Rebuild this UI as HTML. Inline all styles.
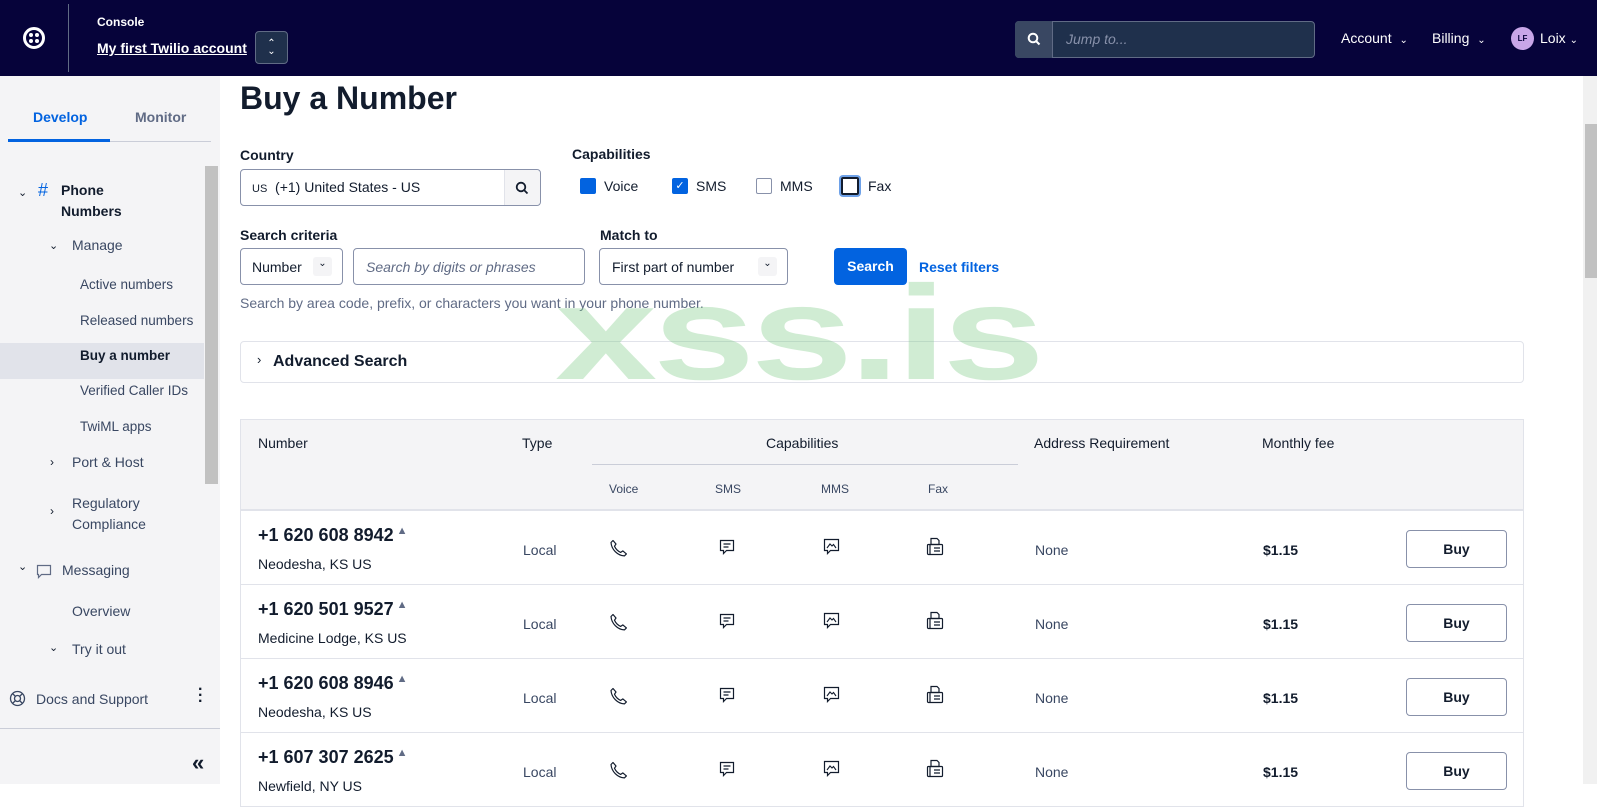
<!DOCTYPE html>
<html><head><meta charset="utf-8"><style>
*{box-sizing:border-box;margin:0;padding:0}
body{width:1597px;height:784px;overflow:hidden;font-family:"Liberation Sans",Arial,sans-serif;color:#121c2d;background:#fff;position:relative}
.a{position:absolute;white-space:nowrap}
.hdr{position:absolute;left:0;top:0;width:1597px;height:76px;background:#06033a;color:#fff}
.side{position:absolute;left:0;top:76px;width:220px;height:708px;background:#f4f4f6}
.lbl{font-weight:bold;font-size:14px}
.box{position:absolute;border:1px solid #8891aa;border-radius:4px;background:#fff}
.sm{font-size:14px;color:#121c2d}
.cb{position:absolute;width:16px;height:16px;border-radius:2px}
.row{position:absolute;left:240px;width:1284px;height:74px;border-bottom:1px solid #e1e3ea;border-left:1px solid #e1e3ea;border-right:1px solid #e1e3ea}
.buy{position:absolute;left:1165px;top:19px;width:101px;height:38px;border:1px solid #8891aa;border-radius:4px;text-align:center;line-height:36px;font-weight:bold;font-size:14px}
</style></head><body>

<div class="hdr">
  <svg class="a" style="left:22px;top:26px" width="24" height="24" viewBox="0 0 24 24"><circle cx="12" cy="12" r="9.5" fill="none" stroke="#fff" stroke-width="3"/><circle cx="9" cy="9" r="2" fill="#fff"/><circle cx="15" cy="9" r="2" fill="#fff"/><circle cx="9" cy="15" r="2" fill="#fff"/><circle cx="15" cy="15" r="2" fill="#fff"/></svg>
  <div class="a" style="left:68px;top:4px;width:1px;height:68px;background:#606b85"></div>
  <div class="a" style="left:97px;top:15px;font-size:12px;font-weight:bold">Console</div>
  <div class="a" style="left:97px;top:40px;font-size:14px;font-weight:bold;text-decoration:underline">My first Twilio account</div>
  <div class="a" style="left:255px;top:31px;width:33px;height:33px;border:1px solid #606b85;border-radius:4px;background:#1f304c;text-align:center;font-size:10px;line-height:8px;padding-top:8px">⌃<br>⌄</div>
  <div class="a" style="left:1015px;top:21px;width:300px;height:37px;border:1px solid #606b85;border-radius:4px;background:#1f304c"></div>
  <div class="a" style="left:1015px;top:21px;width:38px;height:37px;border-right:1px solid #606b85;background:#394762;border-radius:4px 0 0 4px"></div>
  <svg class="a" style="left:1027px;top:32px" width="14" height="14" viewBox="0 0 14 14"><circle cx="6" cy="6" r="4.3" fill="none" stroke="#fff" stroke-width="2"/><path d="M9 9l3.5 3.5" stroke="#fff" stroke-width="2"/></svg>
  <div class="a" style="left:1066px;top:31px;font-size:14px;font-style:italic;color:#8891aa">Jump to...</div>
  <div class="a" style="left:1341px;top:30px;font-size:14px">Account <span style="font-size:10px;margin-left:4px">⌄</span></div>
  <div class="a" style="left:1432px;top:30px;font-size:14px">Billing <span style="font-size:10px;margin-left:4px">⌄</span></div>
  <div class="a" style="left:1511px;top:27px;width:23px;height:23px;border-radius:50%;background:#c8a6e8;color:#06033a;font-size:8px;font-weight:bold;text-align:center;line-height:23px">LF</div>
  <div class="a" style="left:1540px;top:30px;font-size:14px">Loix <span style="font-size:10px">⌄</span></div>
</div>

<div class="side">
  <div class="a" style="left:33px;top:33px;font-size:14px;color:#0263e0;font-weight:bold">Develop</div>
  <div class="a" style="left:135px;top:33px;font-size:14px;color:#606b85;font-weight:bold">Monitor</div>
  <div class="a" style="left:8px;top:65px;width:203px;height:1px;background:#cacdd8"></div>
  <div class="a" style="left:8px;top:63px;width:102px;height:3px;background:#0263e0"></div>
  <div class="a" style="left:205px;top:90px;width:13px;height:318px;background:#c1c1c1"></div>
  <div class="a" style="left:18px;top:110px;font-size:11px">⌄</div>
  <div class="a" style="left:38px;top:104px;font-size:18px;color:#0263e0">#</div>
  <div class="a sm" style="left:61px;top:104px;font-weight:bold;line-height:21px">Phone<br>Numbers</div>
  <div class="a" style="left:49px;top:163px;font-size:11px">⌄</div>
  <div class="a sm" style="left:72px;top:161px;color:#394762">Manage</div>
  <div class="a sm" style="left:80px;top:201px;color:#394762;font-size:13.5px">Active numbers</div>
  <div class="a sm" style="left:80px;top:237px;color:#394762;font-size:13.5px">Released numbers</div>
  <div class="a" style="left:0;top:267px;width:204px;height:36px;background:#e1e3ea"></div>
  <div class="a sm" style="left:80px;top:272px;font-weight:bold;font-size:13.5px">Buy a number</div>
  <div class="a sm" style="left:80px;top:307px;color:#394762;font-size:13.5px">Verified Caller IDs</div>
  <div class="a sm" style="left:80px;top:343px;color:#394762;font-size:13.5px">TwiML apps</div>
  <div class="a" style="left:50px;top:379px;font-size:12px">›</div>
  <div class="a sm" style="left:72px;top:378px;color:#394762">Port &amp; Host</div>
  <div class="a" style="left:50px;top:428px;font-size:12px">›</div>
  <div class="a sm" style="left:72px;top:417px;color:#394762;line-height:21px">Regulatory<br>Compliance</div>
  <div class="a" style="left:18px;top:484px;font-size:11px">⌄</div>
  <svg class="a" style="left:36px;top:488px" width="16" height="15" viewBox="0 0 16 15"><path d="M1.5 1.5h13v9h-9l-3 3v-3h-1z" fill="none" stroke="#606b85" stroke-width="1.2"/></svg>
  <div class="a sm" style="left:62px;top:486px;color:#394762">Messaging</div>
  <div class="a sm" style="left:72px;top:527px;color:#394762">Overview</div>
  <div class="a" style="left:49px;top:565px;font-size:11px">⌄</div>
  <div class="a sm" style="left:72px;top:565px;color:#394762">Try it out</div>
  <svg class="a" style="left:9px;top:614px" width="17" height="17" viewBox="0 0 17 17"><circle cx="8.5" cy="8.5" r="7" fill="none" stroke="#394762" stroke-width="1.3"/><circle cx="8.5" cy="8.5" r="3" fill="none" stroke="#394762" stroke-width="1.3"/><path d="M3.5 3.5l3 3M13.5 3.5l-3 3M3.5 13.5l3-3M13.5 13.5l-3-3" stroke="#394762" stroke-width="1.3"/></svg>
  <div class="a sm" style="left:36px;top:615px;color:#394762">Docs and Support</div>
  <div class="a" style="left:198px;top:611px;font-size:16px;font-weight:bold;line-height:6px">·<br>·<br>·</div>
  <div class="a" style="left:0;top:652px;width:220px;height:1px;background:#cacdd8"></div>
  <div class="a" style="left:192px;top:674px;font-size:22px;font-weight:bold">«</div>
</div>
<div class="a" style="left:1583px;top:76px;width:14px;height:708px;background:#f1f1f1"></div>
<div class="a" style="left:1585px;top:124px;width:12px;height:154px;background:#c1c1c1"></div>

<div class="a" style="left:240px;top:80px;font-size:32px;font-weight:bold">Buy a Number</div>
<div class="a lbl" style="left:240px;top:147px">Country</div>
<div class="box" style="left:240px;top:169px;width:301px;height:37px"></div>
<div class="a" style="left:504px;top:170px;width:36px;height:35px;background:#f4f4f6;border-left:1px solid #e1e3ea;border-radius:0 4px 4px 0"></div>
<svg class="a" style="left:515px;top:181px" width="14" height="14" viewBox="0 0 14 14"><circle cx="6" cy="6" r="4.3" fill="none" stroke="#121c2d" stroke-width="1.8"/><path d="M9 9l3.5 3.5" stroke="#121c2d" stroke-width="1.8"/></svg>
<div class="a sm" style="left:252px;top:179px"><span style="font-size:11px">US</span>&nbsp; (+1) United States - US</div>

<div class="a lbl" style="left:572px;top:146px">Capabilities</div>
<div class="cb" style="left:580px;top:178px;background:#0263e0"></div>
<div class="a sm" style="left:604px;top:178px">Voice</div>
<div class="cb" style="left:672px;top:178px;background:#0263e0;color:#fff;font-size:11px;text-align:center;line-height:16px">✓</div>
<div class="a sm" style="left:696px;top:178px">SMS</div>
<div class="cb" style="left:756px;top:178px;border:1px solid #8891aa"></div>
<div class="a sm" style="left:780px;top:178px">MMS</div>
<div class="cb" style="left:841px;top:177px;width:18px;height:18px;border:2px solid #121c2d;box-shadow:0 0 0 2px #6ea1e8"></div>
<div class="a sm" style="left:868px;top:178px">Fax</div>

<div class="a lbl" style="left:240px;top:227px">Search criteria</div>
<div class="box" style="left:240px;top:248px;width:103px;height:37px"></div>
<div class="a sm" style="left:252px;top:259px">Number</div>
<div class="a" style="left:313px;top:257px;width:19px;height:19px;background:#f4f4f6;border-radius:3px;text-align:center;font-size:10px;line-height:14px">⌄</div>
<div class="box" style="left:353px;top:248px;width:232px;height:37px"></div>
<div class="a sm" style="left:366px;top:259px;font-style:italic;color:#606b85">Search by digits or phrases</div>
<div class="a lbl" style="left:600px;top:227px">Match to</div>
<div class="box" style="left:599px;top:248px;width:189px;height:37px"></div>
<div class="a sm" style="left:612px;top:259px">First part of number</div>
<div class="a" style="left:758px;top:257px;width:19px;height:19px;background:#f4f4f6;border-radius:3px;text-align:center;font-size:10px;line-height:14px">⌄</div>
<div class="a" style="left:834px;top:248px;width:73px;height:37px;background:#0263e0;border-radius:4px;color:#fff;font-weight:bold;font-size:14px;text-align:center;line-height:37px">Search</div>
<div class="a" style="left:919px;top:259px;font-size:14px;font-weight:bold;color:#0263e0">Reset filters</div>
<div class="a" style="left:240px;top:295px;font-size:14px;color:#606b85">Search by area code, prefix, or characters you want in your phone number.</div>

<div class="a" style="left:240px;top:341px;width:1284px;height:42px;border:1px solid #e1e3ea;border-radius:4px"></div>
<div class="a" style="left:257px;top:352px;font-size:13px">›</div>
<div class="a" style="left:273px;top:353px;font-size:16px;font-weight:bold">Advanced Search</div>

<div class="a" style="left:240px;top:419px;width:1284px;height:92px;background:#f4f4f6;border:1px solid #e1e3ea;border-bottom:2px solid #e1e3ea"></div>
<div class="a sm" style="left:258px;top:435px">Number</div>
<div class="a sm" style="left:522px;top:435px">Type</div>
<div class="a sm" style="left:766px;top:435px">Capabilities</div>
<div class="a" style="left:592px;top:464px;width:426px;height:1px;background:#cacdd8"></div>
<div class="a" style="left:609px;top:482px;font-size:12px;color:#394762">Voice</div>
<div class="a" style="left:715px;top:482px;font-size:12px;color:#394762">SMS</div>
<div class="a" style="left:821px;top:482px;font-size:12px;color:#394762">MMS</div>
<div class="a" style="left:928px;top:482px;font-size:12px;color:#394762">Fax</div>
<div class="a sm" style="left:1034px;top:435px">Address Requirement</div>
<div class="a sm" style="left:1262px;top:435px">Monthly fee</div>

<!-- rows -->
<div class="row" style="top:511px">
<div class="a" style="left:17px;top:14px;font-size:18px;font-weight:bold">+1 620 608 8942<span style="font-size:11px;color:#606b85;vertical-align:top;margin-left:3px">▲</span></div>
<div class="a sm" style="left:17px;top:45px">Neodesha, KS US</div>
<div class="a sm" style="left:282px;top:31px;color:#394762">Local</div>
<svg class="a" style="left:369px;top:28px" width="18" height="18" viewBox="0 0 18 18"><path d="M3 1.5l3 3.5-1.5 2.2c1.2 2.7 3.4 4.9 6.2 6.2l2.2-1.5 3.5 3-2 2C7.5 16.5 1.5 10.5 1 3.5z" fill="none" stroke="#121c2d" stroke-width="1.2" stroke-linejoin="round"/></svg>
<svg class="a" style="left:478px;top:28px" width="16" height="17" viewBox="0 0 16 17"><path d="M1.5 1.5h13v10h-7l-3 3v-3h-3z" fill="none" stroke="#121c2d" stroke-width="1.2"/><path d="M4.5 5h7M4.5 8h5" stroke="#121c2d" stroke-width="1.2"/></svg>
<svg class="a" style="left:582px;top:27px" width="17" height="18" viewBox="0 0 17 18"><path d="M1.5 1.5h14v11h-8l-3 3v-3h-3z" fill="none" stroke="#121c2d" stroke-width="1.2"/><path d="M4 10l3-4 2 2 1.5-1.5L13 10" fill="none" stroke="#121c2d" stroke-width="1.1"/></svg>
<svg class="a" style="left:685px;top:26px" width="18" height="19" viewBox="0 0 18 19"><path d="M5 1.5h6l2 2v4H5z" fill="none" stroke="#121c2d" stroke-width="1.2"/><rect x="1.5" y="7.5" width="15" height="10" rx="1" fill="none" stroke="#121c2d" stroke-width="1.2"/><path d="M4 7.5v10M8 11h6M8 14h6" stroke="#121c2d" stroke-width="1.2"/></svg>
<div class="a sm" style="left:794px;top:31px;color:#394762">None</div>
<div class="a sm" style="left:1022px;top:31px;font-weight:bold">$1.15</div>
<div class="buy">Buy</div>
</div>
<div class="row" style="top:585px">
<div class="a" style="left:17px;top:14px;font-size:18px;font-weight:bold">+1 620 501 9527<span style="font-size:11px;color:#606b85;vertical-align:top;margin-left:3px">▲</span></div>
<div class="a sm" style="left:17px;top:45px">Medicine Lodge, KS US</div>
<div class="a sm" style="left:282px;top:31px;color:#394762">Local</div>
<svg class="a" style="left:369px;top:28px" width="18" height="18" viewBox="0 0 18 18"><path d="M3 1.5l3 3.5-1.5 2.2c1.2 2.7 3.4 4.9 6.2 6.2l2.2-1.5 3.5 3-2 2C7.5 16.5 1.5 10.5 1 3.5z" fill="none" stroke="#121c2d" stroke-width="1.2" stroke-linejoin="round"/></svg>
<svg class="a" style="left:478px;top:28px" width="16" height="17" viewBox="0 0 16 17"><path d="M1.5 1.5h13v10h-7l-3 3v-3h-3z" fill="none" stroke="#121c2d" stroke-width="1.2"/><path d="M4.5 5h7M4.5 8h5" stroke="#121c2d" stroke-width="1.2"/></svg>
<svg class="a" style="left:582px;top:27px" width="17" height="18" viewBox="0 0 17 18"><path d="M1.5 1.5h14v11h-8l-3 3v-3h-3z" fill="none" stroke="#121c2d" stroke-width="1.2"/><path d="M4 10l3-4 2 2 1.5-1.5L13 10" fill="none" stroke="#121c2d" stroke-width="1.1"/></svg>
<svg class="a" style="left:685px;top:26px" width="18" height="19" viewBox="0 0 18 19"><path d="M5 1.5h6l2 2v4H5z" fill="none" stroke="#121c2d" stroke-width="1.2"/><rect x="1.5" y="7.5" width="15" height="10" rx="1" fill="none" stroke="#121c2d" stroke-width="1.2"/><path d="M4 7.5v10M8 11h6M8 14h6" stroke="#121c2d" stroke-width="1.2"/></svg>
<div class="a sm" style="left:794px;top:31px;color:#394762">None</div>
<div class="a sm" style="left:1022px;top:31px;font-weight:bold">$1.15</div>
<div class="buy">Buy</div>
</div>
<div class="row" style="top:659px">
<div class="a" style="left:17px;top:14px;font-size:18px;font-weight:bold">+1 620 608 8946<span style="font-size:11px;color:#606b85;vertical-align:top;margin-left:3px">▲</span></div>
<div class="a sm" style="left:17px;top:45px">Neodesha, KS US</div>
<div class="a sm" style="left:282px;top:31px;color:#394762">Local</div>
<svg class="a" style="left:369px;top:28px" width="18" height="18" viewBox="0 0 18 18"><path d="M3 1.5l3 3.5-1.5 2.2c1.2 2.7 3.4 4.9 6.2 6.2l2.2-1.5 3.5 3-2 2C7.5 16.5 1.5 10.5 1 3.5z" fill="none" stroke="#121c2d" stroke-width="1.2" stroke-linejoin="round"/></svg>
<svg class="a" style="left:478px;top:28px" width="16" height="17" viewBox="0 0 16 17"><path d="M1.5 1.5h13v10h-7l-3 3v-3h-3z" fill="none" stroke="#121c2d" stroke-width="1.2"/><path d="M4.5 5h7M4.5 8h5" stroke="#121c2d" stroke-width="1.2"/></svg>
<svg class="a" style="left:582px;top:27px" width="17" height="18" viewBox="0 0 17 18"><path d="M1.5 1.5h14v11h-8l-3 3v-3h-3z" fill="none" stroke="#121c2d" stroke-width="1.2"/><path d="M4 10l3-4 2 2 1.5-1.5L13 10" fill="none" stroke="#121c2d" stroke-width="1.1"/></svg>
<svg class="a" style="left:685px;top:26px" width="18" height="19" viewBox="0 0 18 19"><path d="M5 1.5h6l2 2v4H5z" fill="none" stroke="#121c2d" stroke-width="1.2"/><rect x="1.5" y="7.5" width="15" height="10" rx="1" fill="none" stroke="#121c2d" stroke-width="1.2"/><path d="M4 7.5v10M8 11h6M8 14h6" stroke="#121c2d" stroke-width="1.2"/></svg>
<div class="a sm" style="left:794px;top:31px;color:#394762">None</div>
<div class="a sm" style="left:1022px;top:31px;font-weight:bold">$1.15</div>
<div class="buy">Buy</div>
</div>
<div class="row" style="top:733px">
<div class="a" style="left:17px;top:14px;font-size:18px;font-weight:bold">+1 607 307 2625<span style="font-size:11px;color:#606b85;vertical-align:top;margin-left:3px">▲</span></div>
<div class="a sm" style="left:17px;top:45px">Newfield, NY US</div>
<div class="a sm" style="left:282px;top:31px;color:#394762">Local</div>
<svg class="a" style="left:369px;top:28px" width="18" height="18" viewBox="0 0 18 18"><path d="M3 1.5l3 3.5-1.5 2.2c1.2 2.7 3.4 4.9 6.2 6.2l2.2-1.5 3.5 3-2 2C7.5 16.5 1.5 10.5 1 3.5z" fill="none" stroke="#121c2d" stroke-width="1.2" stroke-linejoin="round"/></svg>
<svg class="a" style="left:478px;top:28px" width="16" height="17" viewBox="0 0 16 17"><path d="M1.5 1.5h13v10h-7l-3 3v-3h-3z" fill="none" stroke="#121c2d" stroke-width="1.2"/><path d="M4.5 5h7M4.5 8h5" stroke="#121c2d" stroke-width="1.2"/></svg>
<svg class="a" style="left:582px;top:27px" width="17" height="18" viewBox="0 0 17 18"><path d="M1.5 1.5h14v11h-8l-3 3v-3h-3z" fill="none" stroke="#121c2d" stroke-width="1.2"/><path d="M4 10l3-4 2 2 1.5-1.5L13 10" fill="none" stroke="#121c2d" stroke-width="1.1"/></svg>
<svg class="a" style="left:685px;top:26px" width="18" height="19" viewBox="0 0 18 19"><path d="M5 1.5h6l2 2v4H5z" fill="none" stroke="#121c2d" stroke-width="1.2"/><rect x="1.5" y="7.5" width="15" height="10" rx="1" fill="none" stroke="#121c2d" stroke-width="1.2"/><path d="M4 7.5v10M8 11h6M8 14h6" stroke="#121c2d" stroke-width="1.2"/></svg>
<div class="a sm" style="left:794px;top:31px;color:#394762">None</div>
<div class="a sm" style="left:1022px;top:31px;font-weight:bold">$1.15</div>
<div class="buy">Buy</div>
</div>

<div class="a" style="left:555px;top:267px;font-size:134px;font-weight:bold;color:rgba(120,200,130,0.35);letter-spacing:-3px;line-height:1;transform:scaleX(1.37);transform-origin:0 0">xss.is</div>
</body></html>
